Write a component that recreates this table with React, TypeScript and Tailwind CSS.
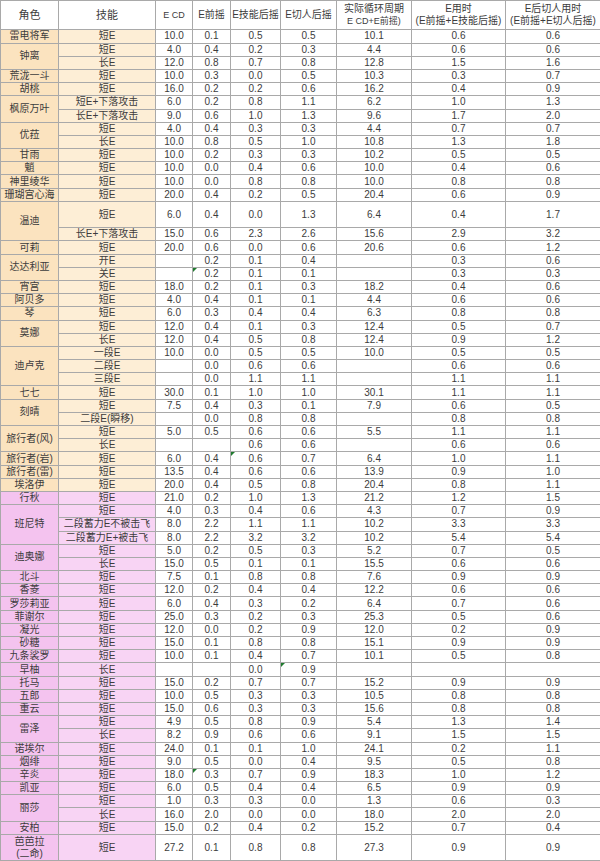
import React from "react";

type Row = { s: string; v: string[]; tall?: boolean; tri?: number };
type Ch = { n: React.ReactNode; c: "b" | "p"; rows: Row[] };

const r = (s: string, line: string, extra: Partial<Row> = {}): Row => {
  const v = line.split(",");
  return { s, v, ...extra };
};

const data: Ch[] = [
  { n: "雷电将军", c: "b", rows: [r("短E", "10.0,0.1,0.5,0.5,10.1,0.6,0.6")] },
  { n: "钟离", c: "b", rows: [r("短E", "4.0,0.4,0.2,0.3,4.4,0.6,0.6"), r("长E", "12.0,0.8,0.7,0.8,12.8,1.5,1.6")] },
  { n: "荒泷一斗", c: "b", rows: [r("短E", "10.0,0.3,0.0,0.5,10.3,0.3,0.7")] },
  { n: "胡桃", c: "b", rows: [r("短E", "16.0,0.2,0.2,0.6,16.2,0.4,0.9")] },
  { n: "枫原万叶", c: "b", rows: [r("短E+下落攻击", "6.0,0.2,0.8,1.1,6.2,1.0,1.3"), r("长E+下落攻击", "9.0,0.6,1.0,1.3,9.6,1.7,2.0")] },
  { n: "优菈", c: "b", rows: [r("短E", "4.0,0.4,0.3,0.3,4.4,0.7,0.7"), r("长E", "10.0,0.8,0.5,1.0,10.8,1.3,1.8")] },
  { n: "甘雨", c: "b", rows: [r("短E", "10.0,0.2,0.3,0.3,10.2,0.5,0.5")] },
  { n: "魈", c: "b", rows: [r("短E", "10.0,0.0,0.4,0.6,10.0,0.4,0.6")] },
  { n: "神里绫华", c: "b", rows: [r("短E", "10.0,0.0,0.8,0.8,10.0,0.8,0.8")] },
  { n: "珊瑚宫心海", c: "b", rows: [r("短E", "20.0,0.4,0.2,0.5,20.4,0.6,0.9")] },
  { n: "温迪", c: "b", rows: [r("短E", "6.0,0.4,0.0,1.3,6.4,0.4,1.7", { tall: true }), r("长E+下落攻击", "15.0,0.6,2.3,2.6,15.6,2.9,3.2")] },
  { n: "可莉", c: "b", rows: [r("短E", "20.0,0.6,0.0,0.6,20.6,0.6,1.2")] },
  { n: "达达利亚", c: "b", rows: [r("开E", ",0.2,0.1,0.4,,0.3,0.6"), r("关E", ",0.2,0.1,0.1,,0.3,0.3", { tri: 1 })] },
  { n: "宵宫", c: "b", rows: [r("短E", "18.0,0.2,0.1,0.3,18.2,0.4,0.6")] },
  { n: "阿贝多", c: "b", rows: [r("短E", "4.0,0.4,0.1,0.1,4.4,0.6,0.6")] },
  { n: "琴", c: "b", rows: [r("短E", "6.0,0.3,0.4,0.4,6.3,0.8,0.8")] },
  { n: "莫娜", c: "b", rows: [r("短E", "12.0,0.4,0.1,0.3,12.4,0.5,0.7"), r("长E", "12.0,0.4,0.5,0.8,12.4,0.9,1.2")] },
  { n: "迪卢克", c: "b", rows: [r("一段E", "10.0,0.0,0.5,0.5,10.0,0.5,0.5"), r("二段E", ",0.0,0.6,0.6,,0.6,0.6"), r("三段E", ",0.0,1.1,1.1,,1.1,1.1")] },
  { n: "七七", c: "b", rows: [r("短E", "30.0,0.1,1.0,1.0,30.1,1.1,1.1")] },
  { n: "刻晴", c: "b", rows: [r("短E", "7.5,0.4,0.3,0.1,7.9,0.6,0.5"), r("二段E(瞬移)", ",0.0,0.8,0.8,,0.8,0.8")] },
  { n: "旅行者(风)", c: "b", rows: [r("短E", "5.0,0.5,0.6,0.6,5.5,1.1,1.1"), r("长E", ",,0.6,0.6,,0.6,0.6")] },
  { n: "旅行者(岩)", c: "b", rows: [r("短E", "6.0,0.4,0.6,0.7,6.4,1.0,1.1", { tri: 2 })] },
  { n: "旅行者(雷)", c: "b", rows: [r("短E", "13.5,0.4,0.6,0.6,13.9,0.9,1.0")] },
  { n: "埃洛伊", c: "b", rows: [r("短E", "20.0,0.4,0.5,0.8,20.4,0.8,1.1")] },
  { n: "行秋", c: "p", rows: [r("短E", "21.0,0.2,1.0,1.3,21.2,1.2,1.5")] },
  { n: "班尼特", c: "p", rows: [r("短E", "4.0,0.3,0.4,0.6,4.3,0.7,0.9"), r("二段蓄力E不被击飞", "8.0,2.2,1.1,1.1,10.2,3.3,3.3"), r("二段蓄力E+被击飞", "8.0,2.2,3.2,3.2,10.2,5.4,5.4")] },
  { n: "迪奥娜", c: "p", rows: [r("短E", "5.0,0.2,0.5,0.3,5.2,0.7,0.5"), r("长E", "15.0,0.5,0.1,0.1,15.5,0.6,0.6")] },
  { n: "北斗", c: "p", rows: [r("短E", "7.5,0.1,0.8,0.8,7.6,0.9,0.9")] },
  { n: "香菱", c: "p", rows: [r("短E", "12.0,0.2,0.4,0.4,12.2,0.6,0.6")] },
  { n: "罗莎莉亚", c: "p", rows: [r("短E", "6.0,0.4,0.3,0.2,6.4,0.7,0.6")] },
  { n: "菲谢尔", c: "p", rows: [r("短E", "25.0,0.3,0.2,0.3,25.3,0.5,0.6")] },
  { n: "凝光", c: "p", rows: [r("短E", "12.0,0.0,0.2,0.9,12.0,0.2,0.9")] },
  { n: "砂糖", c: "p", rows: [r("短E", "15.0,0.1,0.8,0.8,15.1,0.9,0.9")] },
  { n: "九条裟罗", c: "p", rows: [r("短E", "10.0,0.1,0.4,0.7,10.1,0.5,0.8")] },
  { n: "早柚", c: "p", rows: [r("长E", ",,0.0,0.9,,,", { tri: 3 })] },
  { n: "托马", c: "p", rows: [r("短E", "15.0,0.2,0.7,0.7,15.2,0.9,0.9")] },
  { n: "五郎", c: "p", rows: [r("短E", "10.0,0.5,0.3,0.3,10.5,0.8,0.8")] },
  { n: "重云", c: "p", rows: [r("短E", "15.0,0.6,0.3,0.3,15.6,0.8,0.8")] },
  { n: "雷泽", c: "p", rows: [r("短E", "4.9,0.5,0.8,0.9,5.4,1.3,1.4"), r("长E", "8.2,0.9,0.6,0.6,9.1,1.5,1.5")] },
  { n: "诺埃尔", c: "p", rows: [r("短E", "24.0,0.1,0.1,1.0,24.1,0.2,1.1")] },
  { n: "烟绯", c: "p", rows: [r("短E", "9.0,0.5,0.0,0.4,9.5,0.5,0.8")] },
  { n: "辛炎", c: "p", rows: [r("短E", "18.0,0.3,0.7,0.9,18.3,1.0,1.2", { tri: 1 })] },
  { n: "凯亚", c: "p", rows: [r("短E", "6.0,0.5,0.4,0.4,6.5,0.9,0.9")] },
  { n: "丽莎", c: "p", rows: [r("短E", "1.0,0.3,0.3,0.0,1.3,0.6,0.3"), r("长E", "16.0,2.0,0.0,0.0,18.0,2.0,2.0")] },
  { n: "安柏", c: "p", rows: [r("短E", "15.0,0.2,0.4,0.2,15.2,0.7,0.4")] },
  { n: (<>芭芭拉<br />(二命)</>), c: "p", rows: [r("短E", "27.2,0.1,0.8,0.8,27.3,0.9,0.9", { tall: true })] },
];

const cell = "border border-[#a9a9a9] p-0 text-center align-middle whitespace-nowrap";

export default function App() {
  return (
    <div className="w-[600px] h-[861px] overflow-hidden bg-white font-['Liberation_Sans','Noto_Sans_CJK_SC',sans-serif] text-[10px] leading-[12px] text-[#3c3c3c]">
      <table className="w-[600px] table-fixed border-collapse">
        <colgroup>
          <col className="w-[58px]" />
          <col className="w-[97px]" />
          <col className="w-[37px]" />
          <col className="w-[38px]" />
          <col className="w-[50px]" />
          <col className="w-[56px]" />
          <col className="w-[75px]" />
          <col className="w-[94px]" />
          <col className="w-[95px]" />
        </colgroup>
        <tbody>
          <tr className="h-[29.4px]">
            <td className={cell + " text-[11px]"}>角色</td>
            <td className={cell + " text-[11px]"}>技能</td>
            <td className={cell + " text-[9px]"}>E CD</td>
            <td className={cell}>E前摇</td>
            <td className={cell}>E技能后摇</td>
            <td className={cell}>E切人后摇</td>
            <td className={cell}>
              <div className="text-[10px]">实际循环周期</div>
              <div className="text-[9px]">E CD+E前摇)</div>
            </td>
            <td className={cell}>
              <div>E用时</div>
              <div>(E前摇+E技能后摇)</div>
            </td>
            <td className={cell}>
              <div>E后切人用时</div>
              <div>(E前摇+E切人后摇)</div>
            </td>
          </tr>
          {data.map((ch, ci) =>
            ch.rows.map((row, ri) => (
              <tr key={ci + "-" + ri} className={row.tall ? "h-[26.4px]" : "h-[13.2px]"}>
                {ri === 0 && (
                  <td
                    rowSpan={ch.rows.length}
                    className={cell + " text-[10px] leading-[12px] " + (ch.c === "b" ? "bg-[#fbe3bf]" : "bg-[#f4c3ef]")}
                  >
                    {ch.n}
                  </td>
                )}
                <td className={cell + " " + (ch.c === "b" ? "bg-[#fdeed6]" : "bg-[#f8d4f4]")}>{row.s}</td>
                {row.v.map((val, vi) => (
                  <td key={vi} className={cell + " relative"}>
                    {row.tri === vi && (
                      <span className="absolute left-0 top-0 h-0 w-0 border-t-[4px] border-r-[4px] border-t-[#1f7a2e] border-r-transparent" />
                    )}
                    {val}
                  </td>
                ))}
              </tr>
            ))
          )}
        </tbody>
      </table>
    </div>
  );
}
